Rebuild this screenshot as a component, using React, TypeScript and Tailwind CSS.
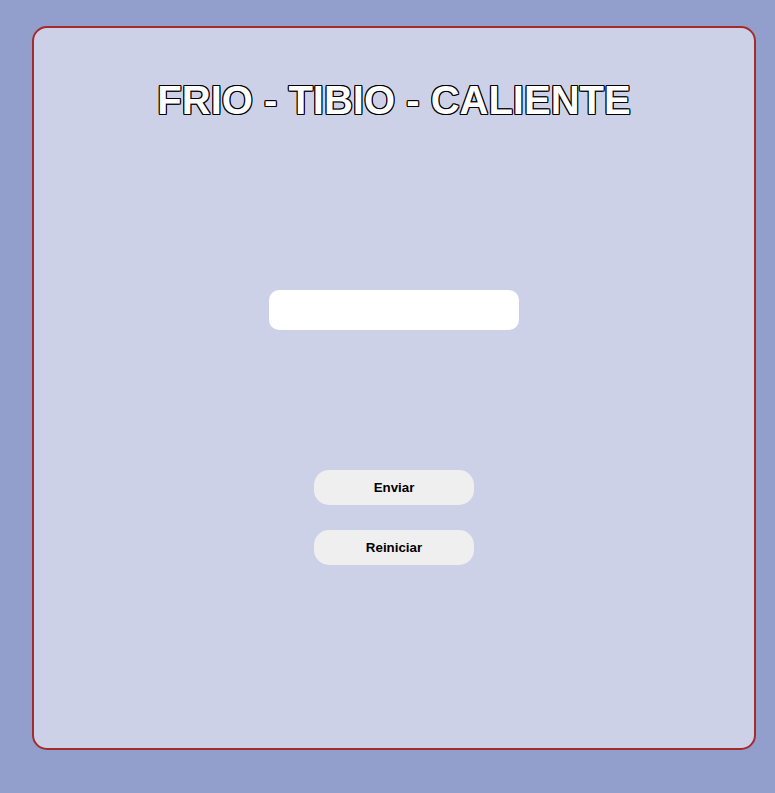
import React, { useState } from "react";

export default function App() {
  const [value, setValue] = useState("");

  return (
    <div className="min-h-[793px] w-full bg-[#929fcd] pt-[26px] pl-[32px] font-['Liberation_Sans',Arial,sans-serif]">
      <div className="flex h-[724px] w-[724px] flex-col items-center rounded-[15px] border-2 border-[#a52a2a] bg-[#cdd1e8]">
        <h1 className="mt-[49px] text-[40px] font-bold leading-[46px] text-white [text-shadow:1px_0_0_#000,-1px_0_0_#000,0_1px_0_#000,0_-1px_0_#000,1px_1px_0_#000,-1px_-1px_0_#000,1px_-1px_0_#000,-1px_1px_0_#000]">
          FRIO - TIBIO - CALIENTE
        </h1>

        <input
          type="text"
          value={value}
          onChange={(e) => setValue(e.target.value)}
          className="mt-[167px] h-[40px] w-[250px] rounded-[10px] bg-white px-3 text-sm outline-none"
        />

        <button className="mt-[140px] h-[35px] w-[160px] rounded-[15px] bg-[#efefef] text-[13.33px] font-bold text-black">
          Enviar
        </button>
        <button className="mt-[25px] h-[35px] w-[160px] rounded-[15px] bg-[#efefef] text-[13.33px] font-bold text-black">
          Reiniciar
        </button>
      </div>
    </div>
  );
}
